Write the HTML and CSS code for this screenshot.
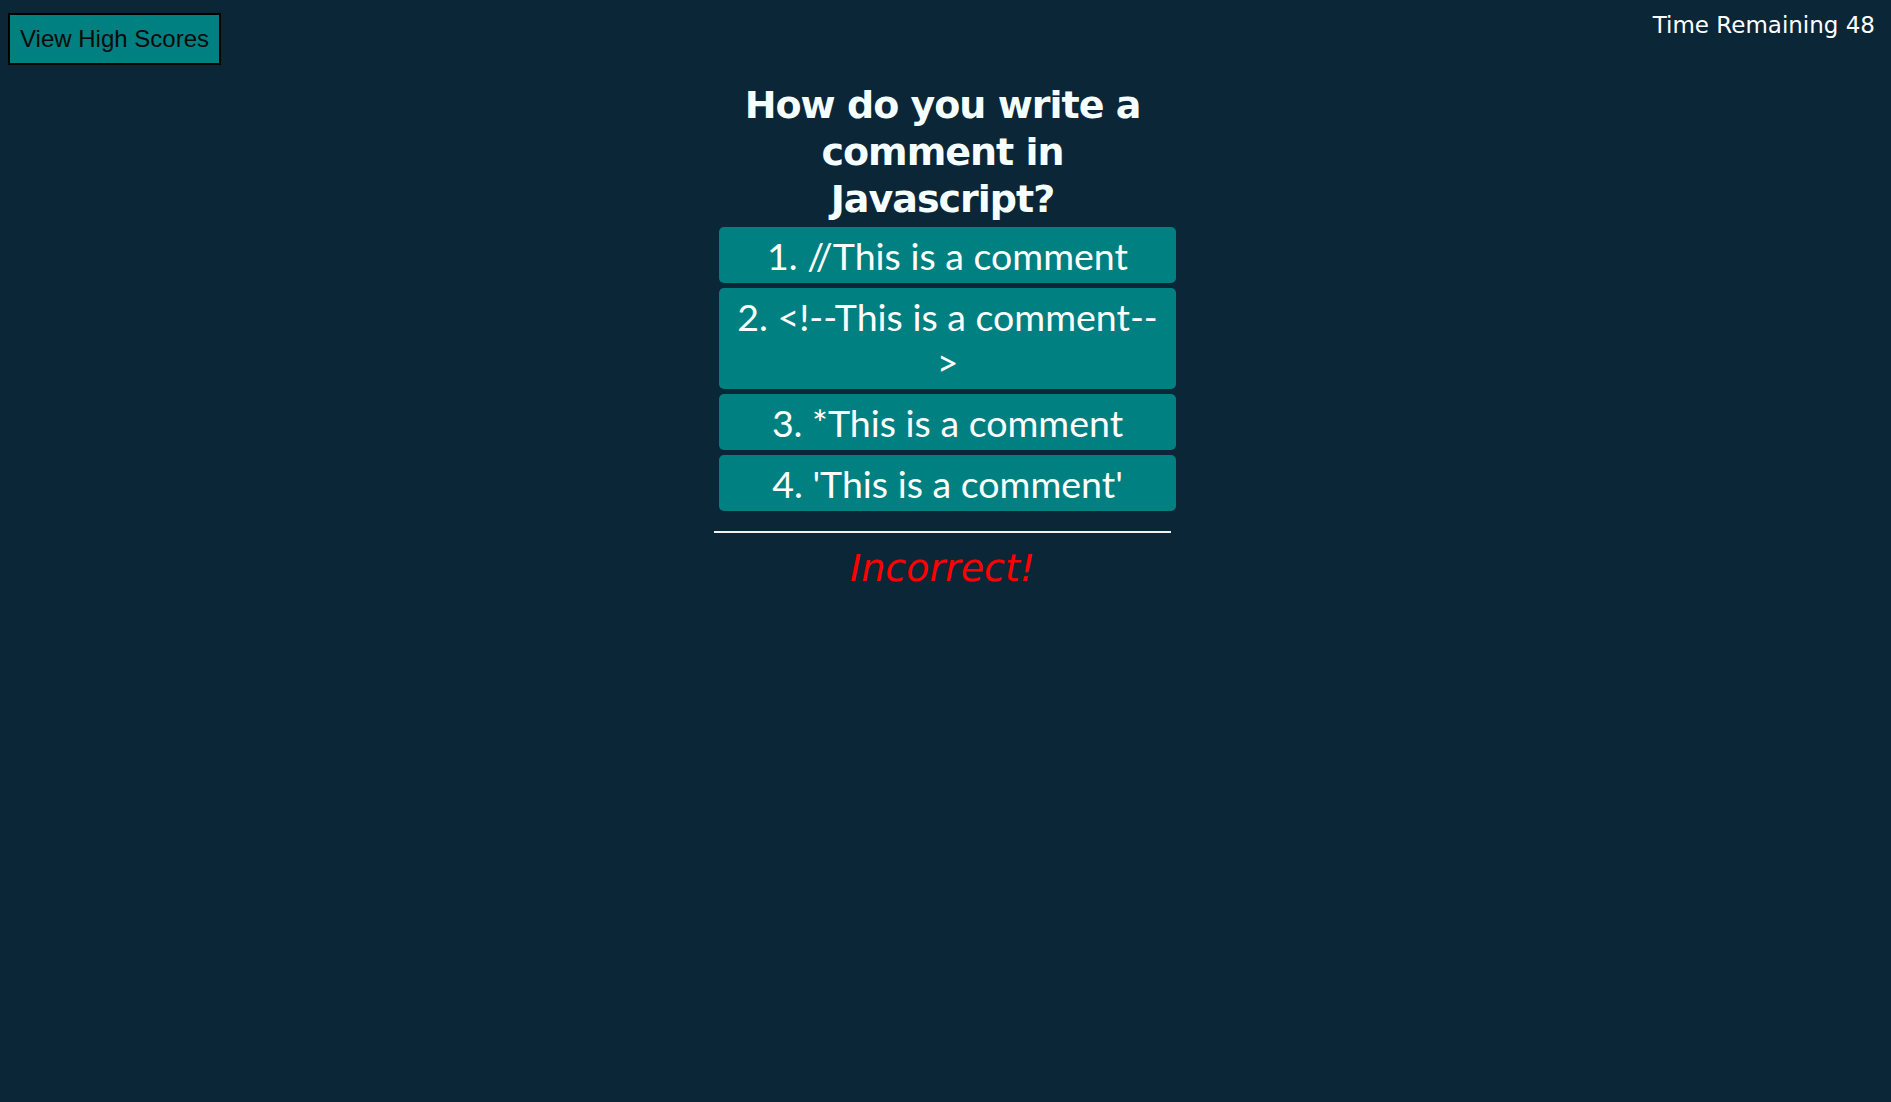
FILE: index.html
```html
<!DOCTYPE html>
<html lang="en">
<head>
<meta charset="utf-8">
<title>Code Quiz</title>
<link rel="stylesheet" href="styles.css">
</head>
<body>
  <header class="top-bar">
    <button class="scores-btn" type="button">View High Scores</button>
    <div class="timer">Time Remaining 48</div>
  </header>
  <main class="quiz">
    <h1 class="question">How do you write a comment in Javascript?</h1>
    <div class="options">
      <button class="option" type="button">1. //This is a comment</button>
      <button class="option" type="button">2. &lt;!--This is a comment<span class="nobr">--</span><wbr>&gt;</button>
      <button class="option" type="button">3. *This is a comment</button>
      <button class="option" type="button">4. 'This is a comment'</button>
    </div>
    <hr class="divider">
    <p class="feedback">Incorrect!</p>
  </main>
</body>
</html>
```

FILE: styles.css
```css
html, body {
  margin: 0;
  padding: 0;
  background: #0b2637;
  min-height: 100%;
}

body {
  font-family: "DejaVu Sans", Verdana, sans-serif;
  color: #f5ffff;
}

.top-bar {
  display: flex;
  justify-content: space-between;
  align-items: flex-start;
  padding: 13px 16px 0 8px;
}

.scores-btn {
  font-family: "Liberation Sans", Arial, sans-serif;
  font-size: 24px;
  color: #0a0a0a;
  background: #008080;
  border: 2px solid #000;
  border-radius: 0;
  padding: 10px 10px;
  margin: 0;
  cursor: pointer;
  line-height: normal;
}

.timer {
  font-size: 23px;
  margin-top: -1px;
  color: #ffffff;
}

.quiz {
  width: 457px;
  margin: 17px 0 0 calc(50% - 231.5px);
  display: flex;
  flex-direction: column;
}

.question {
  margin: 0 0 4px;
  font-size: 38px;
  letter-spacing: -1px;
  line-height: 47px;
  font-weight: bold;
  text-align: center;
  color: #f5ffff;
}

.options {
  display: flex;
  flex-direction: column;
  gap: 5px;
  margin-left: 5px;
  margin-right: -5px;
}

.option {
  font-family: "Lato", "Gill Sans", sans-serif;
  font-size: 37.5px;
  line-height: 45px;
  color: #ffffff;
  background: #008080;
  border: none;
  border-radius: 5px;
  padding: 5.5px 14px;
  margin: 0;
  text-align: center;
  cursor: pointer;
}

.nobr {
  white-space: nowrap;
}

.divider {
  width: 100%;
  margin: 20px 0 0;
  border: none;
  border-top: 2px solid #f2f2f2;
  height: 0;
}

.feedback {
  margin: 13px 0 0;
  font-size: 38px;
  font-style: italic;
  color: #ff0000;
  text-align: center;
}
```
